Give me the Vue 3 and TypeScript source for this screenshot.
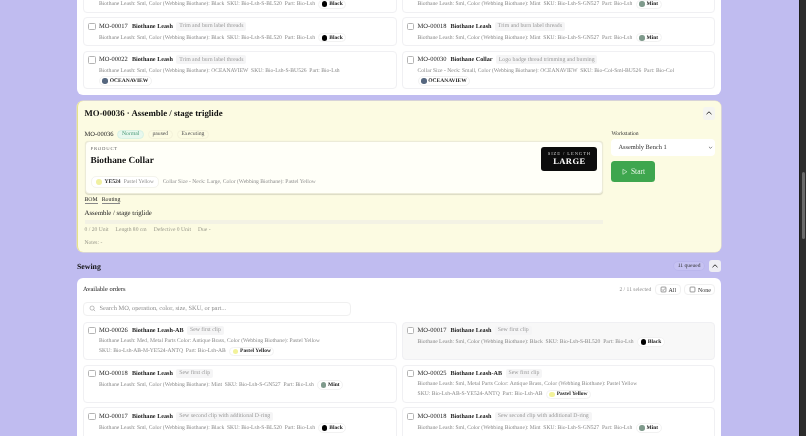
<script setup lang="ts">
interface Order { mo: string; name: string; op: string; lines: string[]; meta: string; swatch: string; color: string; hl?: boolean }
const L = 'Biothane Leash: Sml, Color (Webbing Biothane): '
const black = (op: string): Order => ({ mo: 'MO-00017', name: 'Biothane Leash', op, lines: [], meta: L + 'Black  SKU: Bio-Lsh-S-BL520  Part: Bio-Lsh', swatch: '#000', color: 'Black' })
const mint = (op: string): Order => ({ mo: 'MO-00018', name: 'Biothane Leash', op, lines: [], meta: L + 'Mint  SKU: Bio-Lsh-S-GN527  Part: Bio-Lsh', swatch: '#7f9a8c', color: 'Mint' })
const trim = 'Trim and burn label threads'
const top: Order[] = [
  black(trim), mint(trim),
  { mo: 'MO-00022', name: 'Biothane Leash', op: trim, lines: [L + 'OCEANAVIEW  SKU: Bio-Lsh-S-BU526  Part: Bio-Lsh'], meta: '', swatch: '#56677f', color: 'OCEANAVIEW' },
  { mo: 'MO-00030', name: 'Biothane Collar', op: 'Logo badge thread trimming and burning', lines: ['Collar Size - Neck: Small, Color (Webbing Biothane): OCEANAVIEW  SKU: Bio-Col-Sml-BU526  Part: Bio-Col'], meta: '', swatch: '#56677f', color: 'OCEANAVIEW' },
]
const sew: Order[] = [
  { mo: 'MO-00026', name: 'Biothane Leash-AB', op: 'Sew first clip', lines: ['Biothane Leash: Med, Metal Parts Color: Antique Brass, Color (Webbing Biothane): Pastel Yellow'], meta: 'SKU: Bio-Lsh-AB-M-YE524-ANTQ  Part: Bio-Lsh-AB', swatch: '#f2f29a', color: 'Pastel Yellow' },
  { ...black('Sew first clip'), hl: true },
  mint('Sew first clip'),
  { mo: 'MO-00025', name: 'Biothane Leash-AB', op: 'Sew first clip', lines: ['Biothane Leash: Sml, Metal Parts Color: Antique Brass, Color (Webbing Biothane): Pastel Yellow'], meta: 'SKU: Bio-Lsh-AB-S-YE524-ANTQ  Part: Bio-Lsh-AB', swatch: '#f2f29a', color: 'Pastel Yellow' },
  black('Sew second clip with additional D-ring'),
  mint('Sew second clip with additional D-ring'),
]
</script>

<template>
  <div class="screen">
    <main class="page">
      <section class="panel first">
        <div class="grid">
          <article v-for="o in top.slice(0, 2)" :key="'c' + o.mo" class="row clipped">
            <div class="meta"><span class="mt">{{ o.meta }}</span><span class="chip"><i :style="{ background: o.swatch }"></i>{{ o.color }}</span></div>
          </article>
          <article v-for="o in top" :key="o.mo" class="row">
            <span class="check"></span>
            <div class="body">
              <div class="head"><span class="mo">{{ o.mo }}</span><b class="nm">{{ o.name }}</b><span class="op">{{ o.op }}</span></div>
              <div v-for="l in o.lines" :key="l" class="line">{{ l }}</div>
              <div class="meta"><span v-if="o.meta" class="mt">{{ o.meta }}</span><span class="chip"><i :style="{ background: o.swatch }"></i>{{ o.color }}</span></div>
            </div>
          </article>
        </div>
      </section>

      <section class="active">
        <div class="active-head">
          <h2>MO-00036 · Assemble / stage triglide</h2>
          <button class="chev light"><svg viewBox="0 0 10 10"><path d="M2.500 6.200 5 3.800l2.500 2.400" /></svg></button>
        </div>
        <div class="active-body">
          <div class="active-main">
            <div class="tags"><span class="amo">MO-00036</span><span class="tag green">Normal</span><span class="tag">paused</span><span class="tag">Executing</span></div>
            <div class="product">
              <div class="prod-top">
                <div>
                  <div class="eyebrow">PRODUCT</div>
                  <div class="pname">Biothane Collar</div>
                </div>
                <div class="size"><small>SIZE / LENGTH</small><strong>LARGE</strong></div>
              </div>
              <div class="prod-foot">
                <span class="pchip"><i></i><b>YE524</b><span>Pastel Yellow</span></span>
                <span class="desc">Collar Size - Neck: Large, Color (Webbing Biothane): Pastel Yellow</span>
              </div>
            </div>
            <div class="links"><a>BOM</a><a>Routing</a></div>
            <div class="stage">Assemble / stage triglide</div>
            <div class="bar"></div>
            <div class="facts"><span>0 / 20 Unit</span><span>Length 80 cm</span><span>Defective 0 Unit</span><span>Due -</span></div>
            <div class="notes">Notes: -</div>
          </div>
          <aside class="side">
            <label>Workstation</label>
            <div class="select">Assembly Bench 1<svg viewBox="0 0 10 10"><path d="M2.800 4 5 6.200 7.200 4" /></svg></div>
            <button class="start"><svg viewBox="0 0 12 12"><path d="M3 2v8l6.500-4z" /></svg>Start</button>
          </aside>
        </div>
      </section>

      <div class="section-head">
        <h3>Sewing</h3>
        <div class="right"><span class="queued">11 queued</span><button class="chev"><svg viewBox="0 0 10 10"><path d="M2.500 6.200 5 3.800l2.500 2.400" /></svg></button></div>
      </div>

      <section class="panel sewing">
        <div class="avail">
          <span class="atitle">Available orders</span>
          <div class="sel">
            <span class="count">2 / 11 selected</span>
            <button class="mini"><svg viewBox="0 0 10 10"><rect x="1.500" y="1.500" width="7" height="7" rx="1" /><path d="M3 5l1.500 1.500L7 3.600" /></svg>All</button>
            <button class="mini"><svg viewBox="0 0 10 10"><rect x="1.500" y="1.500" width="7" height="7" rx="1" /></svg>None</button>
          </div>
        </div>
        <div class="search">
          <svg viewBox="0 0 12 12"><circle cx="5.300" cy="5.300" r="3.600" /><path d="m8 8 2.500 2.500" /></svg>
          <span>Search MO, operation, color, size, SKU, or part...</span>
        </div>
        <div class="grid">
          <article v-for="o in sew" :key="o.mo + o.op" class="row" :class="{ hl: o.hl }">
            <span class="check"></span>
            <div class="body">
              <div class="head"><span class="mo">{{ o.mo }}</span><b class="nm">{{ o.name }}</b><span class="op">{{ o.op }}</span></div>
              <div v-for="l in o.lines" :key="l" class="line">{{ l }}</div>
              <div class="meta"><span v-if="o.meta" class="mt">{{ o.meta }}</span><span class="chip"><i :style="{ background: o.swatch }"></i>{{ o.color }}</span></div>
            </div>
          </article>
        </div>
      </section>
    </main>
    <div class="scrollbar"><span></span></div>
  </div>
</template>

<style>
html, body { margin: 0; background: #c0bcf0; }
</style>

<style scoped>
.screen { width: 806px; height: 436px; overflow: hidden; display: flex; background: #c0bcf0; font-family: "Liberation Serif", serif; color: #222; text-rendering: geometricPrecision; }
.page { width: 644.400px; margin: -30px 0 0 77.300px; flex: none; align-self: flex-start; display: flex; flex-direction: column; filter: blur(.42px); will-change: transform; }
.scrollbar { margin-left: auto; width: 7px; background: #2c2c2c; border-left: 1px solid #1c1c1c; box-sizing: border-box; position: relative; }
.scrollbar span { position: absolute; left: 1.500px; width: 3.700px; top: 172px; height: 67px; border-radius: 2px; background: #6a6a6a; }
.panel { background: #fff; border-radius: 6px; padding: 0 6px 6px; }
.grid { display: grid; grid-template-columns: 1fr 1fr; gap: 4.700px; }
.row { box-sizing: border-box; border: 1px solid #f0f0f3; border-radius: 4px; background: #fff; padding: 3.200px 4px 2.800px; display: flex; gap: 3.300px; min-height: 29px; }
.sewing .row { height: 38.300px; }
.row.hl { background: #f8f8f8; }
.clipped { height: 42.700px; align-items: flex-end; padding-left: 15px; }
.check { flex: none; box-sizing: border-box; width: 7.700px; height: 7.700px; border: 1px solid #b4b4b4; border-radius: 1.500px; background: #fff; margin-top: 1px; }
.body { min-width: 0; display: flex; flex-direction: column; }
.head { display: flex; align-items: center; height: 9px; font-size: 6.500px; color: #222; white-space: nowrap; margin-bottom: 2.500px; }
.mo { margin-right: 4px; }
.nm { margin-right: 3.500px; color: #222; font-size: 6.200px; }
.op { font-size: 5.800px; color: #999; background: #f5f5f6; border-radius: 2px; padding: 1.500px 2.800px; }
.line { height: 8px; line-height: 8px; margin-bottom: 1.500px; font-size: 5.600px; color: #888; white-space: pre; }
.meta { display: flex; align-items: center; height: 9.400px; font-size: 5.600px; color: #888; gap: 3.500px; white-space: pre; }
.chip { display: inline-flex; align-items: center; box-sizing: border-box; height: 9.400px; gap: 1.800px; border: 1px solid #f2f2f2; border-radius: 5px; padding: 0 2.500px; color: #222; font-weight: 700; background: #fff; font-size: 5.500px; }
.chip i { width: 5.500px; height: 5.500px; border-radius: 50%; }
.active { margin-top: 6px; height: 150.300px; box-sizing: border-box; background: #fcfbe2; border-left: 1.500px solid #e6e28a; border-radius: 6px; padding: 0 6px 0 6.500px; box-shadow: 0 0 0 .500px #eeeac0; }
.active-head { display: flex; justify-content: space-between; align-items: center; height: 24px; }
h2 { margin: 0; font-size: 8.800px; font-weight: 700; color: #111; }
.chev { width: 12.500px; height: 12.500px; padding: 0; border: 0; border-radius: 3px; background: #eeeef4; display: grid; place-items: center; }
.chev.light { background: #f5f5f0; }
.chev svg { width: 10px; height: 10px; fill: none; stroke: #333; stroke-width: 1; }
.active-body { display: grid; grid-template-columns: 1fr 104px; gap: 8px; }
.active-main { min-width: 0; padding-top: 4px; }
.tags { display: flex; align-items: center; gap: 3.800px; font-size: 5.700px; height: 10px; }
.amo { color: #222; font-size: 6.500px; }
.tag { border: 1px solid #f4f2da; border-radius: 5px; padding: .500px 3.700px; color: #555; }
.tag.green { background: #e8f8ee; border-color: #d8f2e4; color: #4a9a78; }
.product { margin-top: 1.500px; height: 52.600px; box-sizing: border-box; background: #fffff8; border: 1px solid #ecebd8; border-radius: 4px; padding: 4.800px 5px 5px; display: flex; flex-direction: column; justify-content: space-between; box-shadow: 0 .500px 1px #0002; }
.prod-top { display: flex; justify-content: space-between; align-items: flex-start; }
.eyebrow { font-size: 4.700px; letter-spacing: .800px; color: #666; height: 6px; line-height: 6px; }
.pname { font-size: 9.300px; font-weight: 700; color: #111; margin-top: 3px; }
.size { background: #0c0c0c; color: #fff; border-radius: 3px; width: 56px; height: 24.300px; text-align: center; display: flex; flex-direction: column; justify-content: center; }
.size small { font-size: 4.600px; letter-spacing: .900px; color: #ccc; }
.size strong { font-size: 8.500px; letter-spacing: .400px; }
.prod-foot { display: flex; align-items: center; gap: 3.500px; font-size: 5.600px; color: #8f8f8f; }
.pchip { display: inline-flex; align-items: center; box-sizing: border-box; height: 11.700px; gap: 3px; border: 1px solid #f4f4ec; border-radius: 5px; padding: 0 4px; background: #fff; }
.pchip i { width: 6px; height: 6px; border-radius: 50%; background: #f0f0a0; }
.pchip b { color: #333; }
.links { display: flex; gap: 4px; font-size: 5.800px; color: #222; margin-top: 2.500px; height: 8px; line-height: 8px; }
.links a { border-bottom: 1px solid #888; }
.stage { font-size: 6.800px; color: #222; margin-top: 5.300px; height: 8px; line-height: 10px; }
.bar { height: 3.700px; background: #f3f2e4; margin-top: 2.700px; }
.facts { display: flex; gap: 7px; font-size: 5.600px; color: #98988a; margin-top: 1.800px; height: 7px; line-height: 9px; }
.notes { font-size: 5.600px; color: #98988a; margin-top: 6.400px; height: 7px; line-height: 9px; }
.side { display: flex; flex-direction: column; align-items: flex-start; padding-top: 3.700px; }
label { font-size: 5.600px; color: #333; height: 8px; line-height: 10px; }
.select { box-sizing: border-box; margin-top: 1.500px; width: 104px; height: 17.500px; background: #fff; border-radius: 4px; font-size: 6.400px; color: #333; padding: 0 1.500px 0 7px; display: flex; align-items: center; justify-content: space-between; }
.select svg { width: 7px; height: 7px; fill: none; stroke: #555; stroke-width: 1; }
.start { margin-top: 4.800px; width: 43.300px; height: 21.500px; border: 0; border-radius: 3.500px; background: #3ea64e; color: #e8f6e8; font: 7.500px "Liberation Serif", serif; display: flex; align-items: center; justify-content: center; gap: 2.500px; padding: 0; }
.start svg { width: 7.500px; height: 7.500px; fill: none; stroke: #e4f5e4; stroke-width: 1; }
.section-head { height: 26.400px; box-sizing: border-box; padding-top: 2.400px; display: flex; align-items: center; justify-content: space-between; }
h3 { margin: 0; font-size: 7.800px; color: #111; }
.right { display: flex; align-items: center; gap: 4px; }
.queued { font-size: 5.500px; color: #333; border: 1px solid #bab6ec; border-radius: 5px; padding: 1px 3.500px; background: #c6c2f2; }
.sewing { padding-top: 0; }
.avail { display: flex; justify-content: space-between; align-items: center; height: 23.400px; }
.atitle { font-size: 6.500px; color: #222; }
.sel { display: flex; align-items: center; gap: 3.700px; font-size: 5.600px; }
.count { color: #8f8f8f; }
.mini { display: inline-flex; align-items: center; gap: 2px; height: 11px; border: 1px solid #f0f0f0; border-radius: 4px; background: #fff; padding: 0 3.500px; color: #333; font: 6px "Liberation Serif", serif; }
.mini svg { width: 7px; height: 7px; fill: none; stroke: #333; stroke-width: .700; }
.search { width: 268px; height: 14px; box-sizing: border-box; border: 1px solid #f0f0f0; border-radius: 4px; display: flex; align-items: center; gap: 4px; padding-left: 4.500px; margin-bottom: 6px; font-size: 6.400px; color: #8f8f8f; }
.search svg { width: 7px; height: 7px; fill: none; stroke: #666; stroke-width: .700; }
</style>
